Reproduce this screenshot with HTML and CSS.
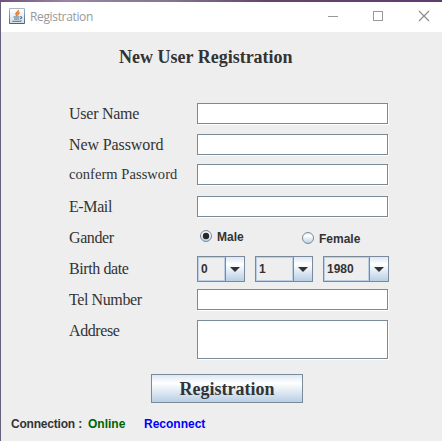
FILE: index.html
```html
<!DOCTYPE html>
<html lang="en">
<head>
<meta charset="utf-8">
<title>Registration</title>
<link rel="stylesheet" href="styles.css">
</head>
<body>
<div class="window">
  <header class="titlebar">
    <svg class="logo" width="16" height="16" viewBox="0 0 16 16">
      <defs><linearGradient id="tile" x2="0" y2="1"><stop stop-color="#a9bccb"/><stop offset="1" stop-color="#42627f"/></linearGradient>
      <linearGradient id="face" x2="0" y2="1"><stop stop-color="#ffffff"/><stop offset="1" stop-color="#d5e0e9"/></linearGradient></defs>
      <rect width="16" height="16" rx="1" fill="url(#tile)"/>
      <rect x="1" y="1" width="14" height="14" fill="url(#face)"/>
      <path d="M9.500 2c.5 2-3.600 2.700-2.500 4.300L8 8M10.600 4.500C8.700 5.300 8.500 6.200 9.200 7.400" fill="none" stroke="#e8792b" stroke-width="1.500"/>
      <path d="M4.500 9h6M5 11h5M3.300 13.200h8.200l1-.6M11 8.800c2.500-.5 2.500 1.800-.2 2.200" fill="none" stroke="#48708f" stroke-width="1.100"/>
    </svg>
    <span class="caption">Registration</span>
    <svg class="controls" width="86" height="12" viewBox="0 0 86 12">
      <g fill="none" stroke="#999" shape-rendering="crispEdges"><path d="M0 6.500h10"/><rect x="45.500" y="1.500" width="9" height="9"/></g>
      <path d="M91 1l10 10M101 1l-10 10" fill="none" stroke="#8c8c8c" stroke-width="1.200"/>
    </svg>
  </header>
  <main>
    <h1><span>New User Registration</span></h1>
    <form>
      <div class="row"><label class="l-user">User Name</label><div class="field"></div></div>
      <div class="row"><label class="l-new">New Password</label><div class="field"></div></div>
      <div class="row"><label class="l-confirm">conferm Password</label><div class="field raised"></div></div>
      <div class="row"><label>E-Mail</label><div class="field"></div></div>
      <div class="row"><label>Gander</label>
        <div class="radios">
          <div class="option">
            <svg width="12" height="12" viewBox="0 0 12 12"><circle cx="6" cy="6" r="5.500" fill="url(#metal)" stroke="#7a8a99"/><circle cx="6" cy="6" r="3.200" fill="#282828"/></svg>
            <span>Male</span>
          </div>
          <div class="option second">
            <svg width="12" height="12" viewBox="0 0 12 12"><defs><linearGradient id="metal" x2="0" y2="1"><stop stop-color="#dde8f3"/><stop offset=".3" stop-color="#fff"/><stop offset="1" stop-color="#b8cfe5"/></linearGradient></defs><circle cx="6" cy="6" r="5.500" fill="url(#metal)" stroke="#7a8a99"/></svg>
            <span>Female</span>
          </div>
        </div>
      </div>
      <div class="row"><label>Birth date</label>
        <div class="combos">
          <div class="combo day"><span>0</span><i><svg width="10" height="5" viewBox="0 0 10 5"><path d="M0 0h10L5 5z" fill="#333"/></svg></i></div>
          <div class="combo month"><span>1</span><i><svg width="10" height="5" viewBox="0 0 10 5"><path d="M0 0h10L5 5z" fill="#333"/></svg></i></div>
          <div class="combo year"><span>1980</span><i><svg width="10" height="5" viewBox="0 0 10 5"><path d="M0 0h10L5 5z" fill="#333"/></svg></i></div>
        </div>
      </div>
      <div class="row"><label>Tel Number</label><div class="field"></div></div>
      <div class="row last"><label>Addrese</label><div class="field area"></div></div>
    </form>
    <button type="button"><span>Registration</span></button>
    <footer><span class="connection">Connection :</span><span class="online">Online</span><span class="reconnect">Reconnect</span></footer>
  </main>
</div>
</body>
</html>
```
FILE: styles.css
```css
* { box-sizing: border-box; }
body {
  margin: 0;
  height: 441px;
  overflow: hidden;
  padding: 2px 0 0 1px;
  background: linear-gradient(90deg, #70527f, #9a84a4 15%, #85768d 38%, #64446f 60%, #5c3f70);
}
.window { height: 439px; background: #eee; box-shadow: -1px 0 #65617c; }
.titlebar { height: 30px; background: #fff; display: flex; padding: 6px 0 0 8px; }
.logo { flex: none; }
.caption {
  margin: 1px 0 0 5px;
  width: 64px;
  font: 12px/16px "Open Sans", "Noto Sans", sans-serif;
  letter-spacing: -.35px;
  color: #999;
  white-space: nowrap;
}
.controls { margin: 2px 28px 0 auto; overflow: visible; }
main { height: 409px; overflow: hidden; color: #333; }
h1 {
  margin: 0 0 0 118px;
  height: 66px;
  padding-top: 15px;
  font: bold 18px/20px "Liberation Serif", serif;
  white-space: nowrap;
}
form { width: 388px; margin-left: 68px; }
.row { height: 31px; display: flex; align-items: flex-start; }
label {
  width: 128px;
  padding-top: 6px;
  font: 16px/20px "Liberation Serif", serif;
  letter-spacing: -.4px;
  white-space: nowrap;
}
.l-user { letter-spacing: -.25px; }
.l-new { letter-spacing: -.1px; }
.l-confirm { font-size: 14.500px; letter-spacing: .05px; padding-top: 4px; }
.field {
  width: 191px;
  height: 21px;
  margin-top: 5px;
  background: #fff;
  border: 1px solid #7a8a99;
  box-shadow: 1px 1px #fff;
}
.field.raised { margin-top: 4px; }
.last { height: 61px; }
.field.area { height: 39px; }
.radios, .combo, footer { font: bold 12px/14px "Liberation Sans", sans-serif; }
.radios { display: flex; padding: 8px 0 0 3px; }
.option { display: flex; gap: 5px; width: 102px; height: 14px; }
.option svg { flex: none; }
.second { margin-top: 2px; }
.combos { display: flex; gap: 10px; padding-top: 3px; }
.combo { display: flex; height: 26px; border: 1px solid #7a8a99; }
.combo span { flex: 1; border: 1px solid #b8cfe5; padding: 4px 0 0 2px; }
.combo i {
  width: 19px;
  border-left: 1px solid #7a8a99;
  background: linear-gradient(#dde8f3, #fff 30%, #b8cfe5);
  display: flex;
  justify-content: center;
  align-items: center;
}
.day { width: 48px; }
.month { width: 58px; }
.year { width: 66px; }
button {
  display: block;
  width: 152px;
  height: 29px;
  margin: -2px 0 0 150px;
  padding: 0;
  border: 1px solid #7a8a99;
  background: linear-gradient(#dde8f3, #fff 30%, #b8cfe5);
  color: #333;
  font: bold 18px/26px "Liberation Serif", serif;
}
footer { display: flex; padding: 14px 0 0 10px; white-space: nowrap; }
.connection { width: 77px; letter-spacing: -.2px; }
.online { width: 56px; color: #006400; }
.reconnect { color: #00f; }
```
